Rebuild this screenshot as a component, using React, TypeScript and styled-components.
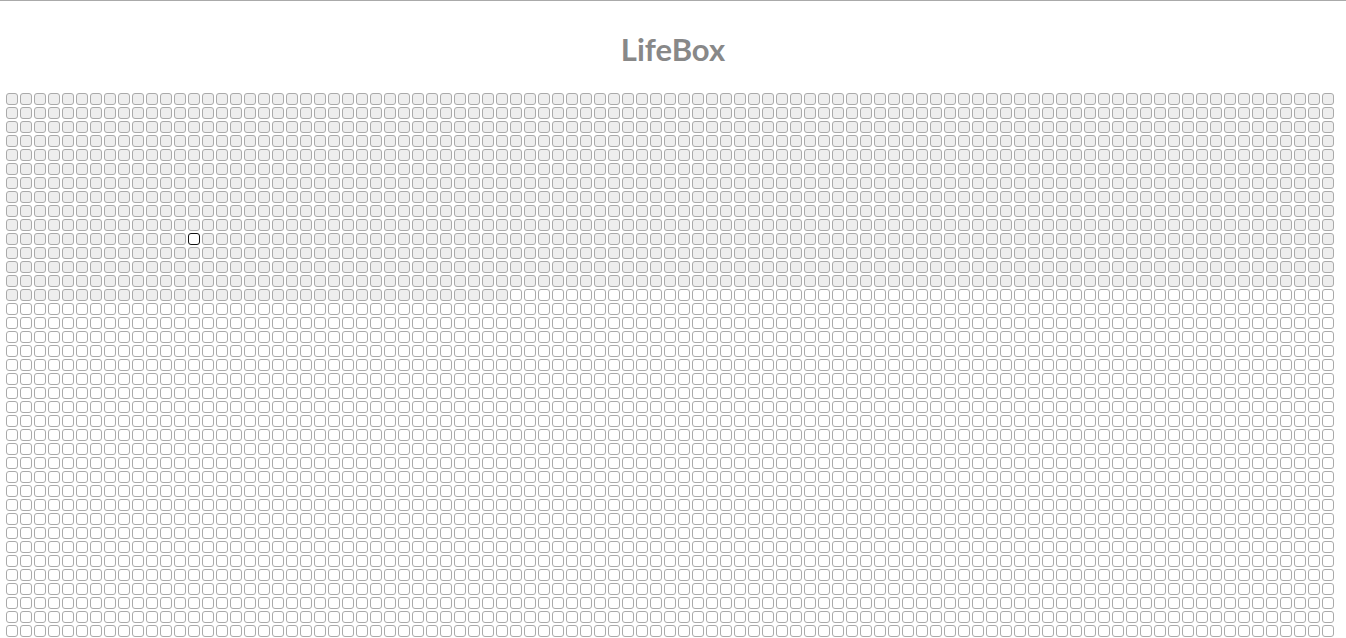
import { createGlobalStyle } from "styled-components";
import styled from "styled-components";

const columns = 95;
const totalBoxes = 80 * 52;
const livedBoxes = 14 * columns + 36;
const focusedBox = 10 * columns + 13;

const GlobalStyle = createGlobalStyle`
  body {
    margin: 0;
    background: #fff;
    font-family: Lato, "Open Sans", sans-serif;
  }
`;

const Page = styled.div`
  border-top: 1px solid #aaa;
`;

const Title = styled.h1`
  margin: 0;
  padding: 30px 0 25px;
  text-align: center;
  font-family: Lato, "Open Sans", sans-serif;
  font-size: 31px;
  line-height: 37px;
  font-weight: 700;
  color: #888;
`;

const Grid = styled.div`
  display: grid;
  grid-template-columns: repeat(${columns}, 12px);
  gap: 2px;
  padding-left: 6px;
`;

const Box = styled.div<{ $lived: boolean; $focused: boolean }>`
  box-sizing: border-box;
  width: 12px;
  height: 12px;
  border: 1px solid ${(p) => (p.$focused ? "#111" : "#aaa")};
  border-radius: 3px;
  background: ${(p) => (p.$lived && !p.$focused ? "#eee" : "#fff")};
`;

export default function App() {
  const boxes = [];
  for (let i = 0; i < totalBoxes; i++) {
    boxes.push(<Box key={i} $lived={i < livedBoxes} $focused={i === focusedBox} />);
  }

  return (
    <>
      <GlobalStyle />
      <Page>
        <Title>LifeBox</Title>
        <Grid>{boxes}</Grid>
      </Page>
    </>
  );
}
